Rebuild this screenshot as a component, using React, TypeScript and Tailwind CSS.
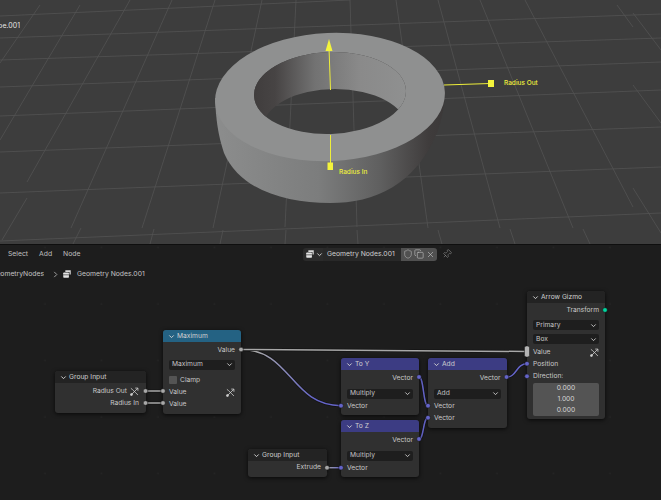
import React from "react";
import { Shield, Copy, X, Pin } from "lucide-react";

const Chevron = ({ className = "" }: { className?: string }) => (
  <svg viewBox="0 0 8 8" className={"w-[7px] h-[7px] shrink-0 " + className} fill="none" stroke="currentColor" strokeWidth="1.1">
    <path d="M1.5 2.8 L4 5.3 L6.5 2.8" />
  </svg>
);

const Gizmo = () => (
  <svg viewBox="0 0 10 10" className="w-[9px] h-[9px] shrink-0 text-[#d0d0d0]" fill="none" stroke="currentColor" strokeWidth="0.9">
    <path d="M1.8 8.2 L8.6 1.4 M5.8 1.2 H8.8 V4.2" />
    <path d="M1 1.5 C3.5 3 5 5.5 8.8 8.8" />
    <circle cx="1.6" cy="8.4" r="1.1" fill="currentColor" />
  </svg>
);

const TreeIcon = () => (
  <svg viewBox="0 0 12 12" className="w-[10px] h-[10px] shrink-0" fill="none">
    <path d="M4 1.5 H10.5 V6.5 H9 V3.5 H4 Z" fill="#d8d8d8" />
    <rect x="1.5" y="4.2" width="6.8" height="6.3" rx="0.8" fill="#e4e4e4" />
    <path d="M1.5 7 H8.3" stroke="#333" strokeWidth="0.8" />
  </svg>
);

const Row = ({ children, right, className = "" }: { children: React.ReactNode; right?: boolean; className?: string }) => (
  <div className={"h-[12px] flex items-center px-[6px] pt-[1.5px] text-[#c8c8c8] " + (right ? "justify-end " : "") + className}>{children}</div>
);

const Drop = ({ label, className = "" }: { label: string; className?: string }) => (
  <div className={"mx-[6px] h-[10px] rounded-[2px] bg-[#1e1e1e] flex items-center justify-between pl-[3px] pr-[2px] text-[#c4c4c4] " + className}>
    <span>{label}</span>
    <Chevron />
  </div>
);

const Node = ({ x, y, w, title, head, children }: { x: number; y: number; w: number; title: string; head: string; children: React.ReactNode }) => (
  <div
    className="absolute rounded-[3px] bg-[#303030] shadow-[0_1px_4px_rgba(0,0,0,0.75)] text-[6.7px] leading-none"
    style={{ left: x, top: y - 244, width: w }}
  >
    <div className="h-[11.5px] rounded-t-[3px] flex items-center gap-[2px] pl-[5px] pt-[1px] text-[#d0d0d0]" style={{ background: head }}>
      <Chevron />
      <span>{title}</span>
    </div>
    {children}
  </div>
);

const horizontals = [
  [0, 16, 350, 0],
  [0, 38, 661, 14],
  [0, 60, 661, 38],
  [0, 87, 661, 62],
  [0, 116, 661, 90],
  [0, 152, 661, 127],
  [0, 193, 661, 167],
  [0, 241, 661, 213],
];

const slants = [
  [0, 63, 40, 5],
  [0, 140, 80, 5],
  [2, 240, 27, 198],
  [27, 182, 130, 0],
  [71, 228, 172, 0],
  [73, 244, 81, 228],
  [142, 228, 215, 0],
  [150, 244, 154, 229],
  [213, 228, 262, 0],
  [220, 244, 223, 230],
  [285, 227, 296, 0],
  [285, 244, 286, 230],
  [357, 227, 350, 0],
  [358, 244, 357, 230],
  [428, 228, 396, 0],
  [442, 244, 438, 230],
  [500, 228, 438, 0],
  [515, 244, 510, 229],
  [573, 228, 480, 0],
  [590, 244, 583, 229],
  [633, 207, 525, 0],
  [661, 233, 633, 188],
  [661, 123, 633, 85],
  [633, 27, 617, 5],
  [661, 50, 633, 13],
];

const Viewport = () => (
  <svg viewBox="0 0 661 244" className="absolute inset-0 w-[661px] h-[244px]">
    <defs>
      <linearGradient id="side" x1="215" x2="445" y1="0" y2="0" gradientUnits="userSpaceOnUse">
        <stop offset="0" stopColor="#8c8d8d" />
        <stop offset="0.45" stopColor="#7c7d7d" />
        <stop offset="0.72" stopColor="#5f5f5f" />
        <stop offset="0.93" stopColor="#3f3c3c" />
        <stop offset="1" stopColor="#3b3838" />
      </linearGradient>
      <linearGradient id="wall" x1="254" x2="406" y1="0" y2="0" gradientUnits="userSpaceOnUse">
        <stop offset="0" stopColor="#403d3d" />
        <stop offset="0.14" stopColor="#474444" />
        <stop offset="0.4" stopColor="#727272" />
        <stop offset="0.7" stopColor="#8a8a8a" />
        <stop offset="1" stopColor="#8f9090" />
      </linearGradient>
      <clipPath id="hole">
        <ellipse cx="330" cy="93" rx="76" ry="41" transform="rotate(-2 330 93)" />
      </clipPath>
      <mask id="ringmask" maskUnits="userSpaceOnUse" x="0" y="0" width="661" height="244">
        <rect width="661" height="244" fill="#ffffff" />
        <ellipse cx="330" cy="93" rx="76" ry="41" transform="rotate(-2 330 93)" fill="#000000" />
      </mask>
    </defs>
    <rect width="661" height="244" fill="#3d3d3d" />
    <g stroke="#535353" strokeWidth="0.8">
      {horizontals.concat(slants).map((l, i) => (
        <line key={i} x1={l[0]} y1={l[1]} x2={l[2]} y2={l[3]} />
      ))}
    </g>
    <g mask="url(#ringmask)">
      <path d="M215 98 C216 120 218 135 224 153 C240 190 285 203 330 203 C375 203 415 185 437 133 C442 118 445 105 445 88 Z" fill="url(#side)" />
      <ellipse cx="330" cy="97" rx="115" ry="64" transform="rotate(-2.5 330 97)" fill="#8f9090" />
    </g>
    <g clipPath="url(#hole)">
      <path fillRule="evenodd" fill="url(#wall)" d="M250 45 H410 V140 H250 Z M263 128 A72 39 0 0 0 407 128 A72 39 0 0 0 263 128 Z" />
    </g>
    <g stroke="#eeee3a" strokeWidth="1" fill="#f4f43c">
      <line x1="330.5" y1="90" x2="329" y2="48" />
      <line x1="330.5" y1="135" x2="330.5" y2="163" />
      <line x1="444" y1="85" x2="490" y2="83.5" />
    </g>
    <path d="M329 39 L332.5 51 H325.5 Z" fill="#f4f43c" />
    <rect x="488" y="80" width="6" height="7" fill="#f4f43c" />
    <rect x="327.5" y="162.5" width="5.5" height="7.5" fill="#f4f43c" />
  </svg>
);

const Wire = ({ d, stroke }: { d: string; stroke: string }) => (
  <>
    <path d={d} fill="none" stroke="#141414" strokeWidth="3" />
    <path d={d} fill="none" stroke={stroke} strokeWidth="1.5" />
  </>
);

const sockets: [number, number, string][] = [
  [145.5, 147, "#a8a8a8"],
  [145.5, 159, "#a8a8a8"],
  [163, 147, "#a8a8a8"],
  [163, 159, "#a8a8a8"],
  [241, 105.5, "#a8a8a8"],
  [341, 161.7, "#6464c8"],
  [419, 133, "#6464c8"],
  [428, 161.7, "#6464c8"],
  [428, 173.7, "#6464c8"],
  [506.5, 133, "#6464c8"],
  [527, 119.7, "#6464c8"],
  [527, 132.3, "#6464c8"],
  [605, 66, "#00d6a0"],
  [419, 195, "#6464c8"],
  [341, 223.7, "#6464c8"],
  [327, 223.7, "#a8a8a8"],
];

const Wires = () => (
  <svg viewBox="0 0 661 256" className="absolute inset-0 w-[661px] h-[256px]">
    <defs>
      <linearGradient id="gp" x1="241" x2="341" y1="0" y2="0" gradientUnits="userSpaceOnUse">
        <stop offset="0.15" stopColor="#a8a8a8" />
        <stop offset="0.75" stopColor="#6464c8" />
      </linearGradient>
      <linearGradient id="gp2" x1="327" x2="341" y1="0" y2="0" gradientUnits="userSpaceOnUse">
        <stop offset="0" stopColor="#a8a8a8" />
        <stop offset="1" stopColor="#6464c8" />
      </linearGradient>
      <pattern id="dots" width="56.5" height="56.5" patternUnits="userSpaceOnUse" x="17" y="32">
        <circle cx="28" cy="28" r="0.8" fill="#272727" />
      </pattern>
    </defs>
    <rect width="661" height="256" fill="url(#dots)" />
    <Wire d="M241 105.5 C291 105.5 291 161.7 341 161.7" stroke="url(#gp)" />
    <Wire d="M241 105.5 L526 107.5" stroke="#a8a8a8" />
    <Wire d="M145.5 147 H163" stroke="#a8a8a8" />
    <Wire d="M145.5 159 H163" stroke="#a8a8a8" />
    <Wire d="M419 133 C424 133 423 161.7 428 161.7" stroke="#6464c8" />
    <Wire d="M419 195 C424 195 423 173.7 428 173.7" stroke="#6464c8" />
    <Wire d="M506.5 133 C517 133 516 119.7 527 119.7" stroke="#6464c8" />
    <Wire d="M327 223.7 H341" stroke="url(#gp2)" />
  </svg>
);

const Sockets = () => (
  <svg viewBox="0 0 661 256" className="absolute inset-0 w-[661px] h-[256px] pointer-events-none">
    {sockets.map(([x, y, c], i) => (
      <circle key={i} cx={x} cy={y} r="2.3" fill={c} stroke="#161616" strokeWidth="0.5" />
    ))}
    <rect x="524.5" y="102" width="5" height="11" rx="1.8" fill="#b4b4b4" stroke="#161616" strokeWidth="0.5" />
  </svg>
);

export default function App() {
  return (
    <div className="w-[661px] h-[500px] overflow-hidden flex flex-col bg-[#1d1d1d] font-[Inter,sans-serif]">
      <div className="relative h-[244px] shrink-0 bg-[#3d3d3d]">
        <Viewport />
        <div className="absolute left-0 top-[21px] w-[20px] overflow-hidden flex justify-end whitespace-nowrap text-[7px] leading-[9px] text-[#e4e4e4]">Pipe.001</div>
        <div className="absolute left-[504px] top-[79px] text-[6.5px] font-medium leading-[8px] text-[#f0f03c]">Radius Out</div>
        <div className="absolute left-[339px] top-[168px] text-[6.5px] font-medium leading-[8px] text-[#f0f03c]">Radius In</div>
      </div>
      <div className="relative flex-1 bg-[#1d1d1d] shadow-[inset_0_1px_0_#0f0f0f] text-[6.8px] text-[#c0c0c0]">
        <Wires />
        <div className="relative h-[20px] flex items-center">
          <div className="flex items-center gap-[11px] pl-[8px] w-[303px]">
            <span>Select</span>
            <span>Add</span>
            <span>Node</span>
          </div>
          <div className="flex items-center h-[13px]">
            <div className="h-full w-[20px] bg-[#2b2b2b] rounded-l-[3px] flex items-center pl-[2px] gap-[1px] text-[#cfcfcf]">
              <TreeIcon />
              <Chevron />
            </div>
            <div className="h-full w-[78px] bg-[#282828] flex items-center pl-[4px] text-[#cfcfcf] whitespace-nowrap">Geometry Nodes.001</div>
            <div className="h-full w-[36px] bg-[#505050] rounded-r-[3px] flex items-center justify-around px-[1px] text-[#c8c8c8]">
              <Shield size={10} strokeWidth={1.2} />
              <Copy size={10} strokeWidth={1.4} />
              <X size={9} strokeWidth={1.6} />
            </div>
          </div>
          <Pin size={10} strokeWidth={1.2} className="ml-[5px] rotate-45 text-[#a0a0a0]" />
        </div>
        <div className="relative h-[20px] flex items-center text-[#c4c4c4]">
          <div className="w-[44px] overflow-hidden flex justify-end whitespace-nowrap">GeometryNodes</div>
          <svg viewBox="0 0 8 8" className="w-[7px] h-[7px] ml-[8px] text-[#b0b0b0]" fill="none" stroke="currentColor" strokeWidth="1">
            <path d="M2.5 1 L5.5 4 L2.5 7" />
          </svg>
          <span className="ml-[3px]"><TreeIcon /></span>
          <span className="ml-[5px]">Geometry Nodes.001</span>
        </div>

        <Node x={55} y={371} w={91} title="Group Input" head="#232323">
          <div className="h-[2px]" />
          <Row right className="pr-[7px]">
            <span className="mr-[3px]">Radius Out</span>
            <Gizmo />
          </Row>
          <Row right className="pr-[7px]">Radius In</Row>
          <div className="h-[4px]" />
        </Node>

        <Node x={163} y={330} w={78} title="Maximum" head="#246283">
          <div className="h-[2px]" />
          <Row right>Value</Row>
          <div className="h-[4px]" />
          <Drop label="Maximum" />
          <div className="h-[4px]" />
          <Row className="gap-[3px]">
            <span className="w-[8px] h-[8px] rounded-[1px] bg-[#545454]" />
            Clamp
          </Row>
          <Row className="justify-between">
            <span>Value</span>
            <Gizmo />
          </Row>
          <Row>Value</Row>
          <div className="h-[4px]" />
        </Node>

        <Node x={341} y={358} w={78} title="To Y" head="#3c3c83">
          <div className="h-[2px]" />
          <Row right>Vector</Row>
          <div className="h-[5px]" />
          <Drop label="Multiply" />
          <div className="h-[1px]" />
          <Row>Vector</Row>
          <div className="h-[3px]" />
        </Node>

        <Node x={341} y={420} w={78} title="To Z" head="#3c3c83">
          <div className="h-[2px]" />
          <Row right>Vector</Row>
          <div className="h-[5px]" />
          <Drop label="Multiply" />
          <div className="h-[1px]" />
          <Row>Vector</Row>
          <div className="h-[3px]" />
        </Node>

        <Node x={428} y={358} w={78.5} title="Add" head="#3c3c83">
          <div className="h-[2px]" />
          <Row right>Vector</Row>
          <div className="h-[5px]" />
          <Drop label="Add" />
          <div className="h-[1px]" />
          <Row>Vector</Row>
          <Row>Vector</Row>
          <div className="h-[4px]" />
        </Node>

        <Node x={248} y={449} w={79} title="Group Input" head="#232323">
          <Row right>Extrude</Row>
          <div className="h-[4px]" />
        </Node>

        <Node x={527} y={291} w={78} title="Arrow Gizmo" head="#232323">
          <div className="h-[1.5px]" />
          <Row right>Transform</Row>
          <div className="h-[4px]" />
          <Drop label="Primary" />
          <div className="h-[4px]" />
          <Drop label="Box" />
          <div className="h-[2px]" />
          <Row className="justify-between">
            <span>Value</span>
            <Gizmo />
          </Row>
          <Row>Position</Row>
          <Row>Direction:</Row>
          <div className="mx-[6px] mt-[1px] flex flex-col gap-[0.5px] rounded-[2px] overflow-hidden text-[#d4d4d4]">
            <div className="h-[10.5px] bg-[#545454] flex items-center justify-center">0.000</div>
            <div className="h-[10.5px] bg-[#545454] flex items-center justify-center">1.000</div>
            <div className="h-[10.5px] bg-[#545454] flex items-center justify-center">0.000</div>
          </div>
          <div className="h-[3px]" />
        </Node>

        <Sockets />
      </div>
    </div>
  );
}
